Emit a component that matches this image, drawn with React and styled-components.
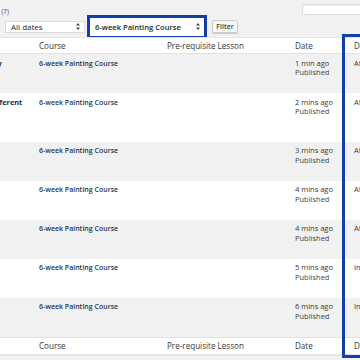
import React from 'react';
import styled, { createGlobalStyle } from 'styled-components';

const Global = createGlobalStyle`
  html, body { margin: 0; padding: 0; background: #f1f1f1; overflow: hidden; width: 360px; height: 360px; }
  body { font-family: "Open Sans", "Liberation Sans", sans-serif; color: #32373c; }
`;

const BLUE = '#1240a8';

const Page = styled.div`
  width: 570px;
  margin-left: -150px;
`;

const TopBar = styled.div`
  display: flex;
  align-items: flex-start;
  height: 16px;
`;

const Subsub = styled.div`
  width: 159px;
  display: flex;
  justify-content: flex-end;
  gap: 4px;
  padding-top: 8px;
  font-size: 6.5px;
  line-height: 8px;
  color: #555;
  white-space: nowrap;
`;

const SubLink = styled.span`
  color: ${p => (p.$current ? '#000' : '#0073aa')};
  font-weight: ${p => (p.$current ? 600 : 400)};
`;

const Count = styled.span`
  color: #555;
  font-weight: 400;
`;

const SearchInput = styled.div`
  margin-left: auto;
  margin-right: 18px;
  margin-top: 4px;
  width: 100px;
  height: 11px;
  box-sizing: border-box;
  background: #fff;
  border: 1px solid #ddd;
  box-shadow: inset 0 1px 2px rgba(0, 0, 0, 0.07);
`;

const Tablenav = styled.div`
  display: flex;
  align-items: center;
  height: 21px;
`;

const SelectBox = styled.div`
  box-sizing: border-box;
  width: ${p => p.$w}px;
  height: ${p => p.$h || 12}px;
  margin-right: ${p => p.$mr || 0}px;
  background: #fff;
  border: ${p => (p.$plain ? 'none' : '1px solid #ddd')};
  display: flex;
  align-items: center;
  justify-content: space-between;
  padding: 0 4px 0 5px;
  font-size: ${p => (p.$bold ? 7.6 : 8)}px;
  font-weight: ${p => (p.$bold ? 600 : 400)};
  color: #23282d;
  white-space: nowrap;
`;

const Highlight = styled.div`
  box-sizing: border-box;
  width: 120px;
  height: 24px;
  border: 3px solid ${BLUE};
  background: #fff;
  margin-right: 5px;
  display: flex;
  align-items: center;
  flex-shrink: 0;
`;

const Button = styled.div`
  box-sizing: border-box;
  width: ${p => p.$w}px;
  height: 13px;
  margin-right: ${p => p.$mr || 0}px;
  background: #f7f7f7;
  border: 1px solid #ccc;
  border-radius: 2px;
  box-shadow: 0 1px 0 #ccc;
  display: flex;
  align-items: center;
  justify-content: center;
  font-size: 7px;
  font-weight: 600;
  color: #444;
`;

const Arrows = () => (
  <svg width="4" height="7" viewBox="0 0 4 7">
    <path d="M2 0 L4 2.6 L0 2.6 Z M2 7 L4 4.4 L0 4.4 Z" fill="#444" />
  </svg>
);

const TableWrap = styled.div`
  position: relative;
`;

const Table = styled.div`
  background: #fff;
  border: 1px solid #e5e5e5;
  box-shadow: 0 1px 1px rgba(0, 0, 0, 0.04);
`;

const COLS = '183px 128px 128px 59px 72px';

const HeadRow = styled.div`
  display: grid;
  grid-template-columns: ${COLS};
  height: ${p => p.$h}px;
  align-items: center;
  background: #fff;
  border-bottom: ${p => (p.$foot ? 'none' : '1px solid #e1e1e1')};
  border-top: ${p => (p.$foot ? '1px solid #e1e1e1' : 'none')};
  box-sizing: border-box;
  font-size: 8.1px;
  font-weight: 500;
  color: #32373c;
`;

const HeadCell = styled.div`
  padding: 0 5px;
  white-space: nowrap;
`;

const Row = styled.div`
  display: grid;
  grid-template-columns: ${COLS};
  align-items: start;
  background: ${p => (p.$striped ? '#f1f1f1' : '#fff')};
  font-size: 7.5px;
  line-height: 9.5px;
`;

const TitleCell = styled.div`
  padding: 4.5px 5px 25px;
  font-size: 7.4px;
  font-weight: 700;
  color: #1f2d44;
`;

const Cell = styled.div`
  padding: 4.5px 5px 0;
  color: ${p => (p.$link ? '#1f3558' : '#32373c')};
  font-size: ${p => (p.$link ? 7 : 7.5)}px;
  font-weight: ${p => (p.$link ? 600 : 400)};
  white-space: nowrap;
`;

const Status = styled.div`
  color: #444;
`;

const ColumnMark = styled.div`
  position: absolute;
  top: -3px;
  bottom: -3px;
  left: 492px;
  width: 100px;
  border: 3px solid ${BLUE};
  pointer-events: none;
`;

const rows = [
  { title: 'Lesson 7: Introduction to Colour Theory', date: '1 min ago', drip: 'After 6 weeks' },
  { title: 'Lesson 6: Painting on many kinds of different surfaces', date: '2 mins ago', drip: 'After 5 weeks' },
  { title: 'Lesson 5: Light and Shadow', date: '3 mins ago', drip: 'After 4 weeks' },
  { title: 'Lesson 4: Brush Techniques', date: '4 mins ago', drip: 'After 3 weeks' },
  { title: 'Lesson 3: Mixing Colors', date: '4 mins ago', drip: 'After 2 weeks' },
  { title: 'Lesson 2: Materials', date: '5 mins ago', drip: 'Immediately' },
  { title: 'Lesson 1: Welcome', date: '6 mins ago', drip: 'Immediately' },
];

const Head = ({ foot }) => (
  <HeadRow $h={foot ? 17 : 16} $foot={foot}>
    <HeadCell>Title</HeadCell>
    <HeadCell>Course</HeadCell>
    <HeadCell>Pre-requisite Lesson</HeadCell>
    <HeadCell>Date</HeadCell>
    <HeadCell>Drip Content</HeadCell>
  </HeadRow>
);

export default function App() {
  return (
    <>
      <Global />
      <Page>
        <TopBar>
          <Subsub>
            <SubLink $current>All <Count>(7)</Count></SubLink>
            <span>|</span>
            <SubLink>Published <Count>(7)</Count></SubLink>
          </Subsub>
          <SearchInput />
        </TopBar>
        <Tablenav>
          <SelectBox $w={100} $mr={4}>Bulk Actions <Arrows /></SelectBox>
          <Button $w={38} $mr={13}>Apply</Button>
          <SelectBox $w={80} $mr={2}>All dates <Arrows /></SelectBox>
          <Highlight>
            <SelectBox $w={114} $h={18} $plain $bold>6-week Painting Course <Arrows /></SelectBox>
          </Highlight>
          <Button $w={26}>Filter</Button>
        </Tablenav>
        <TableWrap>
          <Table>
            <Head />
            {rows.map((r, i) => (
              <Row key={i} $striped={i % 2 === 0}>
                <TitleCell>{r.title}</TitleCell>
                <Cell $link>6-week Painting Course</Cell>
                <Cell />
                <Cell>
                  {r.date}
                  <Status>Published</Status>
                </Cell>
                <Cell>{r.drip}</Cell>
              </Row>
            ))}
            <Head foot />
          </Table>
          <ColumnMark />
        </TableWrap>
      </Page>
    </>
  );
}
